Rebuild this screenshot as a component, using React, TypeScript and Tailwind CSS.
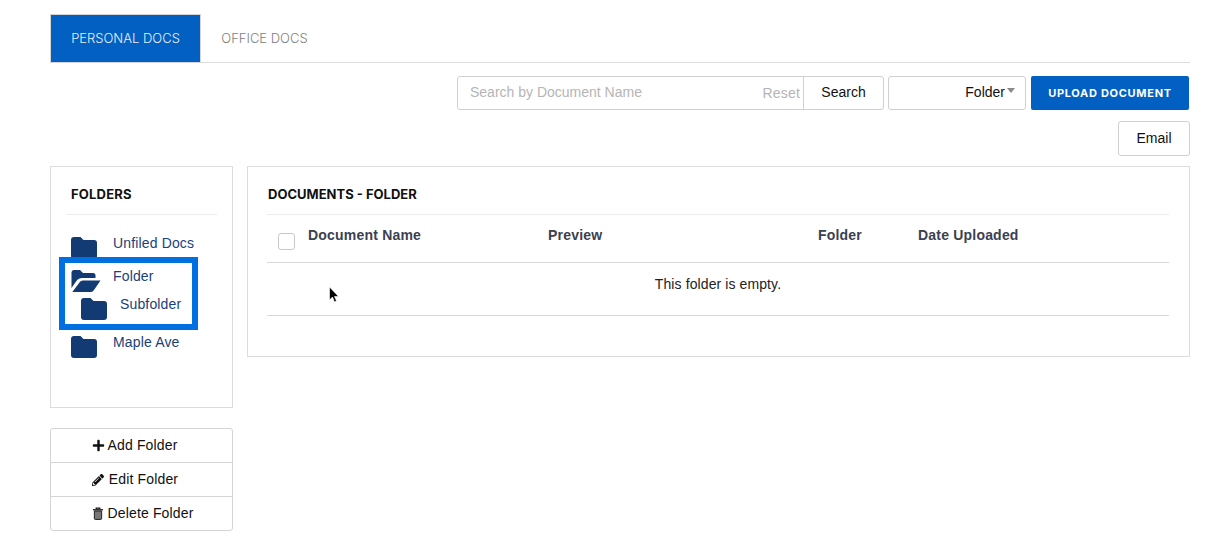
import React from "react";
import { FaPlus, FaPencilAlt } from "react-icons/fa";

const sans = "font-['Liberation_Sans',Arial,sans-serif]";
const head = "font-['Inter',sans-serif]";

function ClosedFolder() {
  return (
    <svg className="ml-px mt-[4px] shrink-0" width="26" height="22" viewBox="0 0 26 22">
      <path d="M3 0h6.500l3 3H23a3 3 0 013 3v13a3 3 0 01-3 3H3a3 3 0 01-3-3V3a3 3 0 013-3z" fill="#123a73" />
    </svg>
  );
}

function OpenFolder() {
  return (
    <svg className="ml-px mt-[4px] shrink-0" width="30" height="22" viewBox="0 0 30 22">
      <path d="M2.500 0H9l3 3h10a2.500 2.500 0 012.500 2.500V8H11.500C8 8 6.500 9.500 5 11.500L0.500 18V2A2.500 2.500 0 012.500 0z" fill="#123a73" />
      <path d="M12 10.500h17.500L22.800 20.200A4 4 0 0120 22H1.300l7-9.300C9 11.500 10.500 10.500 12 10.500z" fill="#123a73" />
    </svg>
  );
}

function FolderRow({ name, open, sub }: { name: string; open?: boolean; sub?: boolean }) {
  return (
    <div className={`flex h-7 items-start ${sub ? "pl-[10px]" : ""}`}>
      {open ? <OpenFolder /> : <ClosedFolder />}
      <span className={`text-[14px] leading-[20px] tracking-[0.15px] text-[#1a3f78] ${sub ? "ml-[13px]" : open ? "ml-[12px]" : "ml-[16px]"}`}>{name}</span>
    </div>
  );
}

function TrashIcon() {
  return (
    <svg width="10" height="13" viewBox="0 0 11 14">
      <path d="M3.500 2V1h4v1" fill="none" stroke="#111" strokeWidth="1.300" />
      <path d="M0 2.200h11v1.400H0z" fill="#111" />
      <path d="M1.500 4.200h8V12.500a1 1 0 01-1 1h-6a1 1 0 01-1-1z" fill="#777" stroke="#111" strokeWidth="1" />
    </svg>
  );
}

function SideButton({ icon, label, gap, shift }: { icon: React.ReactNode; label: string; gap: string; shift: string }) {
  return (
    <div className={`flex h-[34px] items-center justify-center border-b border-[#d4d4d4] text-[14px] tracking-[0.15px] text-[#111] last:h-[33px] last:border-b-0 ${gap} ${shift}`}>
      {icon}
      <span>{label}</span>
    </div>
  );
}

export default function App() {
  return (
    <div className={`relative h-[558px] w-[1227px] overflow-hidden bg-white px-[50px] pt-[14px] ${sans}`}>
      <div className="flex h-[49px] w-[1140px] border-b border-[#dcdcdc]">
        <div className={`flex h-[49px] w-[151px] items-center justify-center border border-[#d4d4d4] bg-[#0260c2] text-[13px] font-light text-[#e8f0fa] ${head}`}>
          PERSONAL DOCS
        </div>
        <div className={`flex h-[48px] w-[127px] items-center justify-center pt-px text-[13px] font-light text-[#808080] ${head}`}>
          OFFICE DOCS
        </div>
      </div>

      <div className="mt-[13px] flex h-[34px] w-[1139px] justify-end gap-[4px]">
        <div className="flex h-[34px] w-[427px] rounded-[3px] border border-[#d0d0d0]">
          <div className="flex flex-1 items-center justify-between pb-px pl-[12px] pr-[3px] text-[14px] text-[#b5b5b5]">
            <span>Search by Document Name</span>
            <span className="mt-[2px] tracking-[0.2px]">Reset</span>
          </div>
          <div className="flex w-[80px] items-center justify-center border-l border-[#d0d0d0] pb-px text-[14px] text-[#111]">Search</div>
        </div>
        <div className="flex h-[34px] w-[138px] items-center justify-end rounded-[3px] border border-[#d0d0d0] pb-px pr-[10px] text-[14px] text-[#111]">
          <span>Folder</span>
          <span className="mb-[4px] ml-[2px] h-0 w-0 border-x-[4px] border-t-[5px] border-x-transparent border-t-[#8a8a8a]" />
        </div>
        <div className={`ml-px flex h-[34px] w-[158px] items-center justify-center rounded-[2px] bg-[#0260c2] text-[11px] font-bold tracking-[0.7px] text-white ${head}`}>
          UPLOAD DOCUMENT
        </div>
      </div>

      <div className="mt-[11px] flex w-[1140px] justify-end">
        <div className="flex h-[35px] w-[72px] items-center justify-center rounded-[3px] border border-[#d0d0d0] text-[14px] text-[#111]">Email</div>
      </div>

      <div className="mt-[10px] flex w-[1140px] items-start gap-[14px]">
        <div className="w-[183px]">
          <div className="h-[242px] border border-[#dcdcdc] px-[15px]">
            <div className={`flex h-[48px] items-center border-b border-[#ececec] pl-[5px] pt-[8px] text-[13px] font-bold tracking-[0.2px] text-[#111] ${head}`}>FOLDERS</div>
            <div className="mt-[18px] pl-[4px]">
              <FolderRow name="Unfiled Docs" />
              <div className="mt-[5px]" />
              <FolderRow name="Folder" open />
              <FolderRow name="Subfolder" sub />
              <div className="mt-[10px]" />
              <FolderRow name="Maple Ave" />
            </div>
          </div>
          <div className="mt-[20px] h-[103px] rounded-[3px] border border-[#d4d4d4]">
            <SideButton icon={<FaPlus className="text-[13px]" />} label="Add Folder" gap="gap-[3px]" shift="pr-[14px]" />
            <SideButton icon={<FaPencilAlt className="text-[12px]" />} label="Edit Folder" gap="gap-[5px]" shift="pr-[13px]" />
            <SideButton icon={<TrashIcon />} label="Delete Folder" gap="gap-[5px]" shift="pl-[3px]" />
          </div>
        </div>

        <div className="h-[191px] w-[943px] border border-[#dcdcdc] pl-[19px] pr-[20px]">
          <div className={`flex h-[48px] items-center border-b border-[#ececec] pl-px pt-[8px] text-[13px] font-bold text-[#111] ${head}`}>DOCUMENTS - FOLDER</div>
          <div className="flex h-[48px] border-b border-[#d8d8d8] pt-[10px] text-[14px] font-bold tracking-[0.2px] text-[#3b4150]">
            <span className="ml-[11px] mt-[8px] h-[17px] w-[17px] rounded-[3px] border border-[#c8c8c8]" />
            <span className="ml-[13px] w-[240px]">Document Name</span>
            <span className="w-[270px]">Preview</span>
            <span className="w-[100px]">Folder</span>
            <span>Date Uploaded</span>
          </div>
          <div className="flex h-[53px] items-start justify-center border-b border-[#d8d8d8] pt-[11px] text-[14px] tracking-[0.1px] text-[#222]">
            This folder is empty.
          </div>
        </div>
      </div>

      <div className="absolute left-[59px] top-[257px] h-[73px] w-[139px] border-[6px] border-[#0070e0]" />
      <svg className="absolute left-[328px] top-[286px]" width="12" height="18" viewBox="0 0 12 18">
        <path d="M1.500 1v13l3-3 2 5 2-1-2-4.500h4z" fill="#000" stroke="#fff" strokeWidth="0.6" />
      </svg>
    </div>
  );
}
